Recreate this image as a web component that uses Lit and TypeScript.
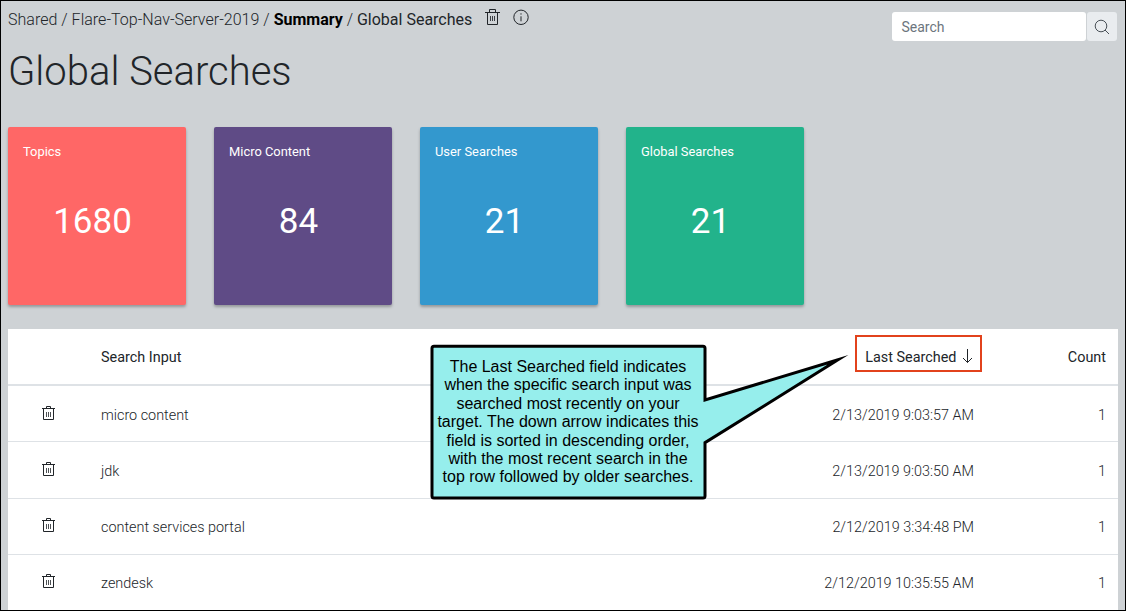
import { LitElement, html, css } from "lit";
import { customElement } from "lit/decorators.js";

const trash = html`
  <svg class="crumb-trash" viewBox="0 0 15 16" fill="none" stroke="currentColor">
    <path d="M0 3.5H15M4.5 3.5V0.5H10.5V3.5M2.5 4V15.5H12.5V4" />
    <path d="M5.5 7V12M7.5 7V12M9.5 7V12" opacity="0.85" />
  </svg>`;

const smallTrash = html`
  <svg class="row-trash" viewBox="0 0 13 14" fill="none" stroke="currentColor">
    <path d="M0 2.5H13M4.5 2.5V0.5H8.5V2.5" />
    <path d="M1.5 3V13.5H11.5V3" />
    <path d="M4.5 6V11M6.5 6V11M8.5 6V11" opacity="0.8" />
  </svg>`;

@customElement("app-root")
export class AppRoot extends LitElement {
  static styles = css`
    :host {
      display: block;
      position: relative;
      box-sizing: border-box;
      width: 1126px;
      height: 611px;
      overflow: hidden;
      border: 1px solid #000;
      background: #ced2d5;
      color: #212529;
      font-family: Roboto, sans-serif;
      font-size: 14px;
    }
    * { box-sizing: border-box; }
    .top {
      display: flex;
      justify-content: space-between;
      height: 46px;
      padding: 0 8px 0 7px;
    }
    .crumbs {
      display: flex;
      height: 37px;
      align-items: center;
      font-size: 16px;
      font-weight: 300;
      white-space: pre;
    }
    .crumbs .path { letter-spacing: 0.022px; }
    .crumbs b { color: #000; font-weight: 700; }
    .crumbs .here { font-weight: 400; }
    .crumb-trash { width: 15px; height: 16px; margin: -5px 0 0 13px; }
    .info { width: 16px; height: 16px; margin: -5px 0 0 12.5px; }
    .search { display: flex; gap: 1px; padding-top: 11px; height: 40px; }
    .field {
      width: 194px;
      height: 29px;
      padding-left: 9.5px;
      border-radius: 3px;
      background: #fff;
      color: #6c757d;
      line-height: 30px;
    }
    .go {
      width: 30px;
      height: 29px;
      display: grid;
      place-items: center;
      border-radius: 3px;
      background: #e9ecef;
      color: #495057;
    }
    .go svg { width: 16px; height: 16px; }
    h1 {
      margin: 0 0 0 7px;
      height: 48px;
      line-height: 50px;
      font-size: 40px;
      font-weight: 300;
    }
    .cards { display: flex; gap: 28px; margin: 32px 0 24px 7px; }
    .card {
      width: 178px;
      height: 178px;
      padding: 16px 15px;
      border-radius: 2px;
      color: #fff;
      font-size: 12.9px;
      line-height: 18px;
      box-shadow: 0 2px 3px rgba(0, 0, 0, 0.28);
    }
    .red { background: #ff6766; }
    .purple { background: #5f4b86; }
    .blue { background: #3398ce; }
    .green { background: #22b38b; }
    .num {
      margin: 38px 9px 0 0;
      text-align: center;
      font-size: 35px;
      line-height: 45px;
    }
    .table { width: 1110px; margin-left: 7px; background: #fff; font-size: 14.4px; }
    .row {
      display: grid;
      grid-template-columns: 93px 1fr 200px 132px;
      height: 56.27px;
      align-items: center;
      border-bottom: 1px solid #dee2e6;
      font-weight: 300;
      line-height: 20px;
      padding: 3.9px 12px 0 0;
    }
    .head { height: 57px; border-bottom-width: 2px; font-weight: 400; padding-top: 3px; }
    .right { text-align: right; }
    .row-trash { width: 13px; height: 14px; margin: -5.8px 0 0 34px; display: block; }
    .sort { display: flex; justify-content: flex-end; gap: 6px; align-items: center; }
    .sort svg { width: 11px; height: 16px; margin: -5px 0.6px 0 0; }
    .mark {
      position: absolute;
      left: 854px;
      top: 334px;
      width: 127px;
      height: 37px;
      border: 2px solid #e2421c;
    }
    .callout { position: absolute; left: 429px; top: 343px; width: 420px; height: 157px; }
    .callout svg { display: block; width: 420px; height: 157px; }
    .note {
      position: absolute;
      left: 3px;
      top: 14px;
      width: 270px;
      text-align: center;
      color: #000;
      font: 16px/18.4px "Liberation Sans", sans-serif;
      white-space: nowrap;
    }
  `;

  private cards = [
    ["Topics", "1680", "red"],
    ["Micro Content", "84", "purple"],
    ["User Searches", "21", "blue"],
    ["Global Searches", "21", "green"],
  ];

  private rows = [
    ["micro content", "2/13/2019 9:03:57 AM", "1"],
    ["jdk", "2/13/2019 9:03:50 AM", "1"],
    ["content services portal", "2/12/2019 3:34:48 PM", "1"],
    ["zendesk", "2/12/2019 10:35:55 AM", "1"],
  ];

  render() {
    return html`
      <div class="top">
        <div class="crumbs"><span class="path">Shared / Flare-Top-Nav-Server-2019 / </span><b>Summary</b><span> / </span><span class="here">Global Searches</span>${trash}<svg class="info" viewBox="0 0 16 16" fill="none" stroke="currentColor"><circle cx="8" cy="8.3" r="7.2" /><path d="M8 7.3V12.3M8 4.3V5.6" /></svg></div>
        <div class="search">
          <div class="field">Search</div>
          <div class="go"><svg viewBox="0 0 16 16" fill="none" stroke="currentColor"><circle cx="7" cy="7" r="5.8" /><path d="M11 11L15 15" /></svg></div>
        </div>
      </div>
      <h1>Global Searches</h1>
      <div class="cards">
        ${this.cards.map(([label, value, tone]) => html`<div class="card ${tone}">${label}<div class="num">${value}</div></div>`)}
      </div>
      <div class="table">
        <div class="row head">
          <span></span><span>Search Input</span>
          <span class="sort">Last Searched<svg viewBox="0 0 11 16" fill="none" stroke="currentColor"><path d="M5.5 1V14.5M1 10L5.5 14.5L10 10" /></svg></span>
          <span class="right">Count</span>
        </div>
        ${this.rows.map(([term, date, count]) => html`<div class="row">${smallTrash}<span>${term}</span><span class="right">${date}</span><span class="right">${count}</span></div>`)}
      </div>
      <div class="mark"></div>
      <div class="callout">
        <svg viewBox="0 0 420 157">
          <path d="M4 2.3H273Q275 2.3 275 4.3V56L408 15.8L275 98.7V152Q275 154 273 154H4Q2 154 2 152V4.3Q2 2.3 4 2.3Z" fill="#96eeec" stroke="#000" stroke-width="3" stroke-miterlimit="12" />
        </svg>
        <div class="note">The Last Searched field indicates<br />when the specific search input was<br />searched most recently on your<br />target. The down arrow indicates this<br />field is sorted in descending order,<br />with the most recent search in the<br />top row followed by older searches.</div>
      </div>
    `;
  }
}
